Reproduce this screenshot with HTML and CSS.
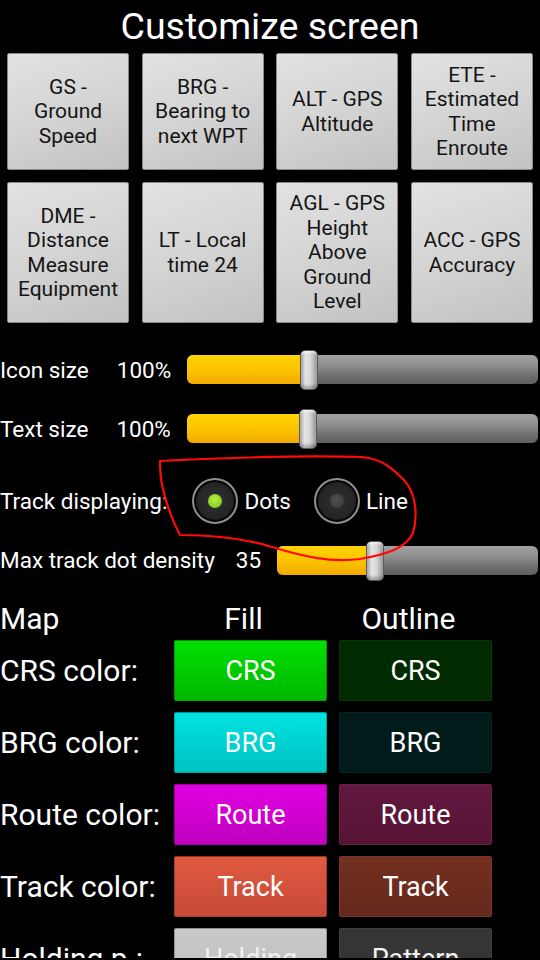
FILE: index.html
```html
<!DOCTYPE html>
<html>
<head>
<meta charset="utf-8">
<link rel="stylesheet" href="styles.css">
</head>
<body>
<div class="screen">
  <h1 class="title">Customize screen</h1>

  <div class="tiles">
    <div class="tile">GS -<br>Ground<br>Speed</div>
    <div class="tile">BRG -<br>Bearing to<br>next WPT</div>
    <div class="tile">ALT - GPS<br>Altitude</div>
    <div class="tile">ETE -<br>Estimated<br>Time<br>Enroute</div>
    <div class="tile">DME -<br>Distance<br>Measure<br>Equipment</div>
    <div class="tile">LT - Local<br>time 24</div>
    <div class="tile">AGL - GPS<br>Height<br>Above<br>Ground<br>Level</div>
    <div class="tile">ACC - GPS<br>Accuracy</div>
  </div>

  <div class="row slider-row first">
    <span class="label">Icon size</span>
    <span class="value">100%</span>
    <div class="slider"><div class="fill" style="width:34.7%"></div><div class="thumb" style="left:34.7%"></div></div>
  </div>
  <div class="row slider-row">
    <span class="label">Text size</span>
    <span class="value">100%</span>
    <div class="slider"><div class="fill" style="width:34.6%"></div><div class="thumb" style="left:34.6%"></div></div>
  </div>

  <div class="row radio-row">
    <span class="label">Track displaying:</span>
    <span class="radio on first-radio"><span class="dot"></span></span>
    <span class="radio-text">Dots</span>
    <span class="radio"><span class="dot"></span></span>
    <span class="radio-text">Line</span>
  </div>

  <div class="row density-row">
    <span class="label">Max track dot density</span>
    <span class="value">35</span>
    <div class="slider"><div class="fill" style="width:37.7%"></div><div class="thumb" style="left:37.7%"></div></div>
  </div>

  <div class="colors">
    <div class="colhead map">Map</div>
    <div class="colhead">Fill</div>
    <div class="colhead">Outline</div>

    <div class="clabel">CRS color:</div>
    <div class="cbtn crs-f">CRS</div>
    <div class="cbtn crs-o">CRS</div>

    <div class="clabel">BRG color:</div>
    <div class="cbtn brg-f">BRG</div>
    <div class="cbtn brg-o">BRG</div>

    <div class="clabel">Route color:</div>
    <div class="cbtn route-f">Route</div>
    <div class="cbtn route-o">Route</div>

    <div class="clabel">Track color:</div>
    <div class="cbtn track-f">Track</div>
    <div class="cbtn track-o">Track</div>

    <div class="clabel">Holding p.:</div>
    <div class="cbtn hold-f">Holding</div>
    <div class="cbtn hold-o">Pattern</div>
  </div>

  <svg class="annot" viewBox="0 0 540 960" width="540" height="960">
    <path d="M160,461 C200,459 300,455 362,457 C382,459 392,468 404,480 C416,493 418,515 413,533 C406,548 388,554 360,559 C330,563 302,556 272,547 C250,540 222,535 180,535 C172,520 166,502 163,489 C160,478 160,470 160,461 Z" fill="none" stroke="#ff0a0a" stroke-width="2.2" stroke-linejoin="round"/>
  </svg>
</div>
</body>
</html>
```

FILE: styles.css
```css
html, body {
  margin: 0;
  padding: 0;
  background: #000;
}

body {
  font-family: Roboto, "Noto Sans", "Liberation Sans", sans-serif;
  color: #fff;
}

.screen {
  position: relative;
  width: 540px;
  height: 958px;
  overflow: hidden;
  background: #000;
}

.title {
  margin: 0;
  height: 53px;
  font-size: 37.5px;
  font-weight: 400;
  line-height: 53px;
  text-align: center;
}

.tiles {
  display: grid;
  grid-template-columns: repeat(4, 122px);
  grid-template-rows: 117px 141px;
  justify-content: space-between;
  row-gap: 12px;
  padding: 0 7px;
}

.tile {
  display: flex;
  align-items: center;
  justify-content: center;
  text-align: center;
  box-sizing: border-box;
  border: 1px solid #8a8a8a;
  border-radius: 2px;
  background: linear-gradient(160deg, #e2e2e2 0%, #d4d4d4 50%, #c2c2c2 100%);
  color: #151515;
  font-size: 21px;
  line-height: 24.5px;
}

.row {
  display: flex;
  align-items: center;
  font-size: 22.5px;
}

.slider-row {
  height: 59px;
}

.slider-row.first {
  margin-top: 17px;
}

.slider-row .value {
  margin-left: 28px;
  margin-right: 16px;
}

.slider {
  position: relative;
  flex: 1;
  height: 29px;
  margin-right: 2px;
  border-radius: 6px;
  background: linear-gradient(to bottom, #a2a2a2 0%, #8c8c8c 40%, #6c6c6c 75%, #5e5e5e 100%);
}

.fill {
  height: 100%;
  border-radius: 6px 0 0 6px;
  background: linear-gradient(to bottom, #ffd400 0%, #fcc400 50%, #f2aa00 100%);
}

.thumb {
  position: absolute;
  top: -5px;
  width: 18px;
  height: 40px;
  margin-left: -9px;
  box-sizing: border-box;
  border: 1px solid #5a5a5a;
  border-radius: 5px;
  background: linear-gradient(to right, #a9a9a9 0%, #e6e6e6 30%, #d6d6d6 60%, #9a9a9a 100%);
  box-shadow: inset 0 2px 2px rgba(255,255,255,0.6), inset 0 -3px 3px rgba(0,0,0,0.25);
}

.radio-row {
  height: 85px;
}

.radio {
  position: relative;
  display: flex;
  align-items: center;
  justify-content: center;
  box-sizing: border-box;
  width: 46px;
  height: 46px;
  border-radius: 50%;
  border: 2px solid #8e8e8e;
  background: radial-gradient(circle, #303030 0%, #262626 55%, #151515 80%);
  box-shadow: inset 0 0 0 2px #050505;
}

.first-radio {
  margin-left: 25px;
}

.dot {
  width: 14px;
  height: 14px;
  border-radius: 50%;
  background: radial-gradient(circle at 45% 40%, #4e4e4e, #3a3a3a);
}

.radio.on .dot {
  background: radial-gradient(circle at 45% 40%, #b8f04c, #86d020 70%, #6cb010);
}

.radio-text {
  margin-left: 6px;
  margin-right: 23px;
}

.density-row {
  height: 34px;
}

.density-row .value {
  margin-left: 21px;
  margin-right: 16px;
}

.colors {
  display: grid;
  grid-template-columns: 162px 153px 153px;
  grid-template-rows: 31px repeat(5, 61px);
  column-gap: 12px;
  row-gap: 11px;
  margin-top: 21px;
  font-size: 30px;
}

.colhead {
  height: 31px;
  line-height: 42px;
  text-align: center;
  padding-right: 14px;
  font-size: 30px;
}

.colhead.map {
  text-align: left;
  padding-right: 0;
}

.clabel {
  display: flex;
  align-items: center;
  white-space: nowrap;
}

.cbtn {
  display: flex;
  align-items: center;
  justify-content: center;
  box-sizing: border-box;
  border-radius: 2px;
  font-size: 27px;
  color: #fff;
  border: 1px solid rgba(0,0,0,0.25);
}

.crs-f { background: linear-gradient(to bottom, #00e000, #00b800); }
.crs-o { background: #002a00; border-color: #0a360a; }
.brg-f { background: linear-gradient(to bottom, #00e2e2, #00c2c2); }
.brg-o { background: #011a1a; border-color: #0a2424; }
.route-f { background: linear-gradient(to bottom, #e000e0, #c000c0); }
.route-o { background: linear-gradient(to bottom, #621840, #561434); border-color: #6a2046; }
.track-f { background: linear-gradient(to bottom, #e05a40, #c64a38); }
.track-o { background: linear-gradient(to bottom, #74301f, #65281e); border-color: #7a3626; }
.hold-f { background: linear-gradient(to bottom, #cacaca, #bbbbbb); color: #f0f0f0; }
.hold-o { background: #353535; border-color: #404040; color: #f2f2f2; }

.annot {
  position: absolute;
  top: 0;
  left: 0;
  pointer-events: none;
}
```
